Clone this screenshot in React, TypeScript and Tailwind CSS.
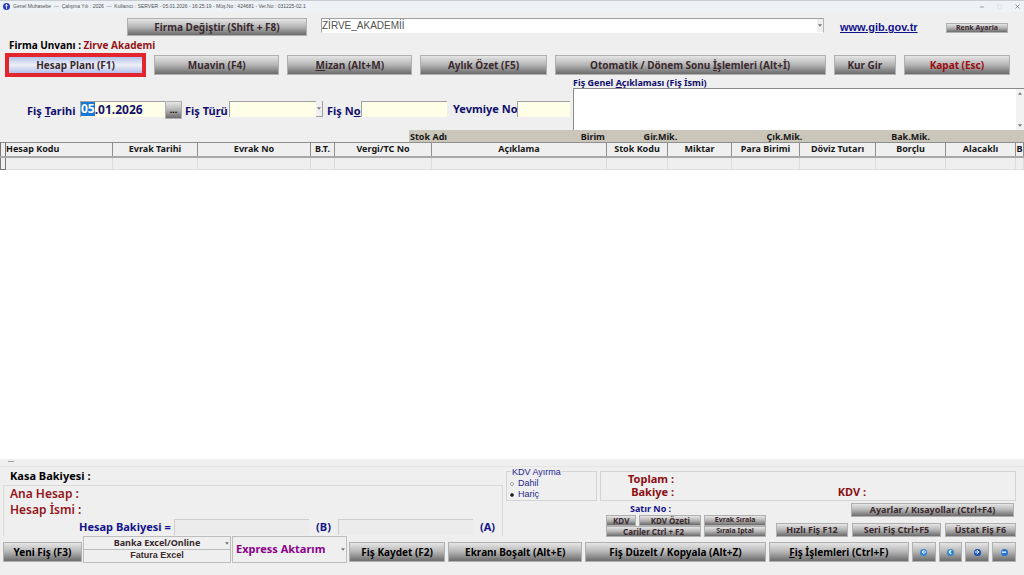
import type { ReactNode } from "react";
import clsx from "clsx";
import { ArrowLeft, ArrowRight, ChevronLeft, Minus, Square, X } from "lucide-react";

const METAL =
    "flex items-center justify-center whitespace-nowrap overflow-hidden border border-[#b0b0b0] bg-linear-to-b from-[#e6e6e6] via-[#b4b4b4] to-[#6c6c6c] font-bold";

const MetalButton = ({ children, className }: { children: ReactNode; className?: string }) => (
    <button type="button" className={clsx(METAL, className)}>
        <span>{children}</span>
    </button>
);

const Arrow = () => (
    <svg viewBox="0 0 6 4" className="h-[3px] w-1 fill-neutral-500">
        <path d="M0 0h6L3 4z" />
    </svg>
);

const columns = [
    { name: "Evrak Tarihi", width: "w-[85px]" },
    { name: "Evrak No", width: "w-[113px]" },
    { name: "B.T.", width: "w-6" },
    { name: "Vergi/TC No", width: "w-[97px]" },
    { name: "Açıklama", width: "" },
    { name: "Stok Kodu", width: "w-[61px]" },
    { name: "Miktar", width: "w-16" },
    { name: "Para Birimi", width: "w-[68px]" },
    { name: "Döviz Tutarı", width: "w-[76px]" },
    { name: "Borçlu", width: "w-[70px]" },
    { name: "Alacaklı", width: "w-[70px]" },
    { name: "B", width: "w-2" },
];

const TitleBar = () => (
    <header className="flex h-3 items-center border-t border-[#c9ced3] bg-[#edf2f7] px-[3px] text-neutral-600">
        <svg viewBox="0 0 12 12" className="mr-[3px] h-[7px] w-[7px]">
            <circle cx="6" cy="6" r="6" fill="#2a3cc0" />
            <path d="M6 2v8M4 5l2-2 2 2" stroke="#fff" strokeWidth="1.5" fill="none" />
        </svg>
        <h1 className="flex-1 font-['Liberation_Sans',sans-serif] text-[5px] whitespace-pre">
            Genel Muhasebe  ---  Çalışma Yılı : 2026  ---  Kullanıcı : SERVER - 05.01.2026 - 16:25:19 - Müş.No : 424681 - Ver.No : 031225-02.1
        </h1>
        <div className="flex items-center gap-3">
            <button type="button" aria-label="Küçült"><Minus size={6} /></button>
            <button type="button" aria-label="Büyüt" className="text-neutral-300"><Square size={5} /></button>
            <button type="button" aria-label="Kapat"><X size={7} /></button>
        </div>
    </header>
);

const CompanyBar = () => (
    <div className="flex h-6 items-end pr-4 pl-[127px]">
        <MetalButton className="h-[18px] w-[180px] text-[10px] text-[#3a2a2e]">Firma Değiştir (Shift + F8)</MetalButton>
        <div className="relative ml-3.5 flex flex-1 items-end self-stretch pb-[3px]">
            <select
                aria-label="Firma"
                className="h-[15px] w-full appearance-none border border-r-[#b5b5b5] border-b-white border-l-[#a0a0a0] border-t-[#a0a0a0] bg-white font-['Liberation_Sans',sans-serif] text-[10px] leading-[13px] text-neutral-600"
            >
                <option>ZİRVE_AKADEMİİ</option>
            </select>
            <span className="pointer-events-none absolute right-px bottom-1 flex h-[13px] w-1.5 items-center justify-center bg-[#efefef]"><Arrow /></span>
        </div>
        <a href="#gib" className="ml-4 w-[106px] font-['Liberation_Sans',sans-serif] text-[11px] leading-[18px] font-bold text-[#12128c] underline">
            www.gib.gov.tr
        </a>
        <MetalButton className="mb-[3px] h-2.5 w-[62px] text-[7px] text-[#3a2a2e]">Renk Ayarla</MetalButton>
    </div>
);

const Toolbar = () => (
    <nav className="grid grid-cols-[141fr_125fr_125fr_126fr_271fr_62fr_106fr] items-center gap-2 pr-3.5 pl-[5px] text-[10px] text-[#3a2a2e]">
        <button type="button" className="h-6 border-4 border-[#e3262b] bg-linear-to-b from-[#b3c2ea] via-[#eef0f6] to-[#b3c0ea] font-bold">
            <span className="flex items-center justify-center leading-4">Hesap Planı (F1)</span>
        </button>
        <MetalButton className="h-5">Muavin (F4)</MetalButton>
        <MetalButton className="h-5"><u>M</u>izan (Alt+M)</MetalButton>
        <MetalButton className="h-5">Aylık Özet (F5)</MetalButton>
        <MetalButton className="h-5">Otomatik / Dönem Sonu <u>İ</u>şlemleri (Alt+İ)</MetalButton>
        <MetalButton className="h-5">Kur Gir</MetalButton>
        <MetalButton className="h-5 text-[#9c0c10]">Kapat (Esc)</MetalButton>
    </nav>
);

const FIELD = "h-4 border-t border-l border-[#a0a0a0] bg-[#ffffe8] text-[12px] text-[#10106c] font-bold";

const VoucherForm = () => (
    <form className="flex text-[11px] font-bold text-[#10106c]">
        <div className="flex w-[573px] items-start pt-6 pl-[27px] leading-5 whitespace-nowrap">
            <label htmlFor="tarih" className="w-[53px]">Fiş <u>T</u>arihi</label>
            <div className={clsx(FIELD, "flex w-[85px]")}>
                <span className="h-3.5 bg-[#1a76d2] leading-3.5 text-white">05</span>
                <input id="tarih" defaultValue=".01.2026" className="w-full min-w-0 leading-3.5 outline-none" />
            </div>
            <MetalButton className="h-[18px] w-[17px] text-[9px] text-black">...</MetalButton>
            <label htmlFor="tur" className="ml-[3px] w-11">Fiş Tü<u>r</u>ü</label>
            <div className="relative flex w-[94px]">
                <select id="tur" className={clsx(FIELD, "w-full appearance-none")} />
                <span className="pointer-events-none absolute inset-y-0 right-0 flex w-[7px] items-center justify-center border-r border-b border-[#a0a0a0] bg-[#efefef]"><Arrow /></span>
            </div>
            <label htmlFor="no" className="ml-1 w-[34px]">Fiş N<u>o</u></label>
            <input id="no" className={clsx(FIELD, "w-[86px]")} />
            <label htmlFor="yevmiye" className="ml-1.5 w-16 leading-4">Yevmiye No</label>
            <input id="yevmiye" className={clsx(FIELD, "w-[53px]")} />
        </div>
        <div className="flex flex-1 flex-col">
            <label htmlFor="aciklama" className="text-[9px] leading-[11px]">Fiş Genel <u>A</u>çıklaması (Fiş İsmi)</label>
            <div className="flex h-[42px] border-t border-l border-[#8a8a8a] bg-white">
                <textarea id="aciklama" className="flex-1 resize-none outline-none" />
                <div className="flex w-2 flex-col items-center justify-between bg-[#f2f2f2] py-[3px]">
                    <span className="rotate-180"><Arrow /></span>
                    <Arrow />
                </div>
            </div>
        </div>
    </form>
);

const VoucherTable = () => (
    <main className="flex-1 overflow-hidden bg-white text-[9px] font-bold text-neutral-900">
        <div className="flex bg-[#efefef]">
            <div className="ml-[409px] grid h-3 flex-1 grid-cols-[171fr_63fr_123fr_125fr_133fr] items-center bg-[#cbc6ba] pl-px">
                <span>Stok Adı</span>
                <span>Birim</span>
                <span>Gir.Mik.</span>
                <span>Çık.Mik.</span>
                <span>Bak.Mik.</span>
            </div>
        </div>
        <table className="w-full table-fixed border-collapse border-t border-[#8f8f8f] bg-[#efefef] leading-3">
            <thead>
                <tr className="h-3.5 border-b-2 border-[#a8a8a8]">
                    <th className="w-[5px] border-r border-l border-[#777]" />
                    <th className="w-[107px] border-r border-[#8f8f8f] text-left">Hesap Kodu</th>
                    {columns.map((column) => (
                        <th key={column.name} className={clsx("overflow-hidden border-r border-[#8f8f8f] whitespace-nowrap", column.width)}>
                            {column.name}
                        </th>
                    ))}
                </tr>
            </thead>
            <tbody>
                <tr className="h-[13px]">
                    <td className="border border-[#777]" />
                    <td className="border-r border-b border-[#dcdcdc]" />
                    {columns.map((column) => (
                        <td key={column.name} className="border-r border-b border-[#dcdcdc]" />
                    ))}
                </tr>
            </tbody>
        </table>
    </main>
);

const AccountPanel = () => (
    <section className="w-[503px] pl-[3px]">
        <p className="pl-[7px] text-[11px] leading-[18px] font-bold text-black">Kasa Bakiyesi :</p>
        <div className="border-t border-r border-l border-[#dadada] pl-1.5 text-[12px] leading-4 font-semibold text-[#941418]">
            <p>Ana Hesap :</p>
            <p>Hesap İsmi :</p>
            <div className="flex h-[18px] items-center pl-[69px] text-[11px] font-bold text-[#12128c]">
                <label htmlFor="borc" className="w-[95px]">Hesap Bakiyesi =</label>
                <input id="borc" readOnly className="h-4 w-[135px] border-t border-l border-[#cfcfcf] bg-[#ececec]" />
                <span className="w-[29px] text-center">(B)</span>
                <input id="alacak" aria-label="Alacak" readOnly className="h-4 w-[135px] border-t border-l border-[#cfcfcf] bg-[#ececec]" />
                <span className="w-[29px] text-center">(A)</span>
            </div>
        </div>
    </section>
);

const RADIO = "h-1 w-1 appearance-none rounded-full border border-neutral-400 bg-white checked:border-neutral-600 checked:bg-black";

const Totals = () => (
    <section className="flex flex-1 flex-col pr-2 pl-[3px]">
        <div className="flex gap-[3px]">
            <fieldset className="relative mt-1 h-[30px] w-[91px] border border-[#d4d4d4] pt-1.5 pl-[3px] font-['Liberation_Sans',sans-serif] text-[9px] leading-[11px] text-[#28288e]">
                <legend className="absolute -top-[5px] left-1 bg-[#efefef] px-px">KDV Ayırma</legend>
                <label className="flex items-center gap-1"><input type="radio" name="kdv" className={RADIO} />Dahil</label>
                <label className="flex items-center gap-1"><input type="radio" name="kdv" defaultChecked className={RADIO} />Hariç</label>
            </fieldset>
            <div className="mt-1 flex h-[30px] flex-1 border border-[#d4d4d4] text-[11px] leading-[13px] font-bold text-[#8c1014]">
                <div className="w-[73px] text-right">
                    <p>Toplam :</p>
                    <p>Bakiye :</p>
                </div>
                <p className="ml-auto self-end pr-[149px] pb-0.5">KDV :</p>
            </div>
        </div>
        <div className="flex pt-0.5 text-[#3a2a2e]">
            <div className="ml-[100px] w-[160px] text-[8px]">
                <p className="pl-6 text-[9px] leading-3 font-bold text-[#12128c]">Satır No :</p>
                <div className="grid grid-cols-[30fr_61fr_61fr] gap-x-[3px]">
                    <MetalButton className="h-[11px]">KDV</MetalButton>
                    <MetalButton className="h-[11px]">KDV Özeti</MetalButton>
                    <MetalButton className="h-[11px] text-[7px]">Evrak Sırala</MetalButton>
                    <MetalButton className="col-span-2 h-[11px]">Cariler Ctrl + F2</MetalButton>
                    <MetalButton className="h-[11px] text-[7px]">Sırala İptal</MetalButton>
                </div>
            </div>
            <div className="ml-2.5 flex flex-1 flex-col items-end gap-1.5 text-[9px]">
                <MetalButton className="mr-0.5 h-3.5 w-[163px]">Ayarlar / Kısayollar (Ctrl+F4)</MetalButton>
                <div className="grid w-full grid-cols-[72fr_89fr_71fr] gap-1">
                    <MetalButton className="h-3.5">Hızlı Fiş F12</MetalButton>
                    <MetalButton className="h-3.5">Seri Fiş Ctrl+F5</MetalButton>
                    <MetalButton className="h-3.5">Üstat Fiş F6</MetalButton>
                </div>
            </div>
        </div>
    </section>
);

const navigation = [
    { label: "İlk", icon: <ArrowLeft size={6} strokeWidth={4} />, color: "bg-[#2d86d8]" },
    { label: "Önceki", icon: <ChevronLeft size={6} strokeWidth={5} />, color: "bg-[#2d86d8]" },
    { label: "Sonraki", icon: <ArrowRight size={6} strokeWidth={4} />, color: "bg-[#1450b8]" },
    { label: "Son", icon: <Minus size={6} strokeWidth={5} />, color: "bg-[#2474d0]" },
];

const ActionBar = () => (
    <footer className="flex h-[39px] items-start gap-0.5 pr-2 pl-[3px] text-[10px] text-black">
        <MetalButton className="mt-1.5 h-5 w-[79px]">Yeni Fiş (F3)</MetalButton>
        <div className="-ml-px w-[148px] border border-[#bdbdbd] text-[9px] font-bold text-[#3a2a2e]">
            <div className="relative flex h-[13px] border-b border-[#bdbdbd]">
                <select aria-label="Banka" className="w-full appearance-none text-center leading-3">
                    <option>Banka Excel/Online</option>
                </select>
                <span className="pointer-events-none absolute inset-y-0 right-px flex items-center"><Arrow /></span>
            </div>
            <button type="button" className="flex h-3 w-full items-center justify-center font-['Liberation_Sans',sans-serif] font-bold">Fatura Excel</button>
        </div>
        <div className="relative -ml-px flex h-[27px] w-[115px] border border-[#bdbdbd]">
            <select aria-label="Aktarım" className="w-full appearance-none pl-[3px] text-[11px] font-bold text-[#8a008a]">
                <option>Express Aktarım</option>
            </select>
            <span className="pointer-events-none absolute inset-y-0 right-px flex items-center"><Arrow /></span>
        </div>
        <div className="mt-1.5 grid flex-1 grid-cols-[97fr_135fr_182fr_141fr_24fr_24fr_24fr_24fr] gap-[3px]">
            <MetalButton className="h-5">Fiş Kaydet (F2)</MetalButton>
            <MetalButton className="h-5">Ekranı Boşalt (Alt+E)</MetalButton>
            <MetalButton className="h-5">Fiş Düzelt / Kopyala (Alt+Z)</MetalButton>
            <MetalButton className="h-5"><u>F</u>iş İşlemleri (Ctrl+F)</MetalButton>
            {navigation.map((item) => (
                <button key={item.label} type="button" aria-label={item.label} className={clsx(METAL, "h-5")}>
                    <span className={clsx("flex h-[7px] w-[7px] items-center justify-center rounded-full text-white", item.color)}>{item.icon}</span>
                </button>
            ))}
        </div>
    </footer>
);

const App = () => {
    return (
        <div className="flex min-h-screen flex-col bg-[#efefef] font-['Noto_Sans',sans-serif]">
            <TitleBar />
            <CompanyBar />
            <p className="pt-px pl-[9px] text-[10px] leading-4 font-bold text-black">
                Firma Unvanı : <span className="text-[#941418]">Zirve Akademi</span>
            </p>
            <Toolbar />
            <VoucherForm />
            <VoucherTable />
            <div className="h-2 border-b border-[#e4e4e4] pt-0.5 pl-2"><div className="h-px w-1.5 bg-neutral-400" /></div>
            <div className="flex h-[69px]">
                <AccountPanel />
                <Totals />
            </div>
            <ActionBar />
        </div>
    );
};

export default App;
